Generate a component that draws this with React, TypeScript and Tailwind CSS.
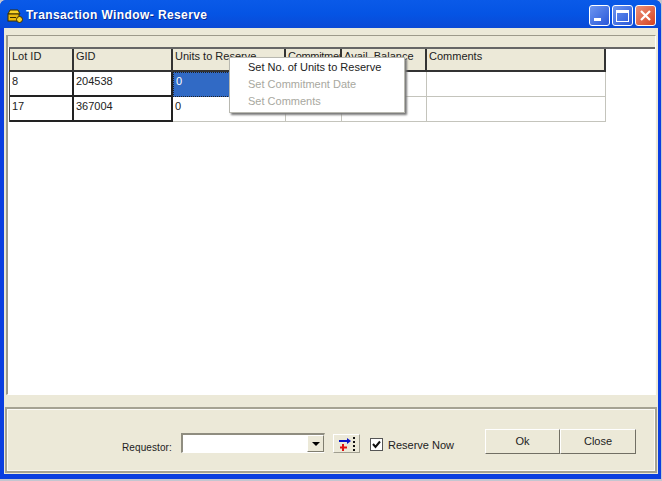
import React from "react";

const font = { fontFamily: '"Liberation Sans", Arial, sans-serif' };

function Cell({ w, className = "", children }: { w: string; className?: string; children?: React.ReactNode }) {
  return <div className={`${w} shrink-0 h-full pl-[2px] overflow-hidden whitespace-nowrap ${className}`}>{children}</div>;
}

const thick = "pt-[3px] border-r-2 border-b-2 border-[#222]";
const thin = "pt-[3px] border-r border-b border-[#c4c4bc]";
const head = "pt-[1px] bg-[#ece9d8] border-r-2 border-b-2 border-[#333]";

export default function App() {
  return (
    <div className="w-[662px] h-[481px] overflow-hidden bg-[#c4c6d0] text-[11px] leading-[13px] text-[#222]" style={font}>
      <div className="w-[661px] h-[479px] flex flex-col bg-[#0a3ee0] rounded-t-[6px]">
        {/* Title bar */}
        <div className="h-[28px] shrink-0 flex items-start pt-[5px] pl-[6px] pr-[5px] rounded-t-[6px] bg-gradient-to-b from-[#0a5ae8] via-[#0554e4] to-[#0a49d6]">
          <svg width="18" height="18" viewBox="0 0 18 18" className="shrink-0 mt-[2px]">
            <path d="M4 3h8l2 4H2z" fill="#f6d32a" stroke="#3a2e00" strokeWidth="1" />
            <rect x="2" y="7" width="11" height="7" fill="#e8b90f" stroke="#3a2e00" />
            <circle cx="13.5" cy="12.5" r="3" fill="#f6d32a" stroke="#3a2c00" />
            <path d="M4 10.5h6" stroke="#3a2e00" />
          </svg>
          <span className="ml-[2px] mt-[4px] text-white font-bold text-[12px] tracking-[0.4px] [text-shadow:1px_1px_#0a2a90]">Transaction Window- Reserve</span>
          <div className="ml-auto flex gap-[2px]">
            <div className="w-[21px] h-[21px] rounded-[3px] border border-white bg-gradient-to-br from-[#6d95f0] to-[#2a56d8] flex items-end pl-[4px] pb-[4px]">
              <div className="w-[7px] h-[3px] bg-white" />
            </div>
            <div className="w-[21px] h-[21px] rounded-[3px] border border-white bg-gradient-to-br from-[#6d95f0] to-[#2a56d8] flex items-center justify-center">
              <div className="w-[13px] h-[12px] border border-white border-t-[3px]" />
            </div>
            <div className="w-[21px] h-[21px] rounded-[3px] border border-white bg-gradient-to-br from-[#ec9078] to-[#d4401c] flex items-center justify-center">
              <svg width="13" height="13" viewBox="0 0 13 13"><path d="M2 2l9 9M11 2l-9 9" stroke="#fff" strokeWidth="2.2" /></svg>
            </div>
          </div>
        </div>

        {/* Client */}
        <div className="flex-1 min-h-0 ml-[4px] mr-[3px] mb-[5px] bg-[#ece9d8] flex flex-col pt-[7px] px-[1px]">
          {/* Grid */}
          <div className="relative h-[360px] shrink-0 mx-[1px] border-l-2 border-t border-[#9d9a8a] border-r border-r-[#fdfdfa] border-b border-b-[#fff]">
            <div className="h-[11px] bg-[#ece9d8]" />
            <div className="bg-white h-[347px] pl-[1px]">
              <div className="flex h-[25px] border-t-2 border-[#666] border-l border-l-[#444]">
                <Cell w="w-[64px]" className={head}>Lot ID</Cell>
                <Cell w="w-[99px]" className={head}>GID</Cell>
                <Cell w="w-[113px]" className={head}>Units to Reserve</Cell>
                <Cell w="w-[56px]" className={`${head} tracking-[-0.3px]`}>Commitment</Cell>
                <Cell w="w-[85px]" className={head}>Avail. Balance</Cell>
                <Cell w="w-[179px]" className={head}>Comments</Cell>
              </div>
              <div className="flex h-[25px] border-l border-l-[#444]">
                <Cell w="w-[64px]" className={thick}>8</Cell>
                <Cell w="w-[99px]" className={thick}>204538</Cell>
                <Cell w="w-[113px]" className="pt-[2px] bg-[#316ac5] text-white border border-dotted border-[#222]">0</Cell>
                <Cell w="w-[56px]" className={thin} />
                <Cell w="w-[85px]" className={thin} />
                <Cell w="w-[179px]" className={thin} />
              </div>
              <div className="flex h-[25px] border-l border-l-[#444]">
                <Cell w="w-[64px]" className={thick}>17</Cell>
                <Cell w="w-[99px]" className={thick}>367004</Cell>
                <Cell w="w-[113px]" className={thin}>0</Cell>
                <Cell w="w-[56px]" className={thin} />
                <Cell w="w-[85px]" className={thin} />
                <Cell w="w-[179px]" className={thin} />
              </div>
            </div>

            {/* Context menu */}
            <div className="absolute left-[221px] top-[21px] w-[176px] h-[56px] bg-white border border-[#b8b8b0] shadow-[2px_2px_2px_#777] pl-[18px] pt-[3px] flex flex-col gap-[4px] leading-[13px]">
              <div className="text-[#222]">Set No. of Units to Reserve</div>
              <div className="text-[#a8a8a0]">Set Commitment Date</div>
              <div className="text-[#a8a8a0]">Set Comments</div>
            </div>
          </div>

          {/* Bottom panel */}
          <div className="mt-[12px] h-[66px] shrink-0 border-2 border-[#a5a292] flex items-start text-[#222] outline outline-1 outline-[#fbfaf5] -outline-offset-3">
            <div className="ml-[115px] mt-[32px] w-[52px] text-[10px] tracking-[0.1px]">Requestor:</div>
            <div className="mt-[24px] ml-[7px] w-[144px] h-[20px] flex bg-white border-t-2 border-l-2 border-[#8f8d80] border-r border-b border-r-[#ece9d8] border-b-[#fff]">
              <div className="flex-1" />
              <div className="w-[17px] h-[17px] bg-[#ece9d8] border border-[#807e70] border-t-white border-l-white flex items-center justify-center">
                <div className="w-0 h-0 border-x-[4px] border-x-transparent border-t-[4px] border-t-black" />
              </div>
            </div>
            <div className="mt-[25px] ml-[8px] w-[27px] h-[19px] bg-[#ece9d8] border border-[#a09e90] border-t-white border-l-white flex items-center justify-center">
              <svg width="20" height="16" viewBox="0 0 20 16">
                <path d="M2 5h9" stroke="#0a14c8" strokeWidth="2" />
                <path d="M10 2l4 3-4 3z" fill="#0a14c8" />
                <path d="M6 8v7M3 11.5h7" stroke="#e01010" strokeWidth="2" />
                <path d="M17 1v2M17 5v2M17 9v2M17 13v2" stroke="#111" strokeWidth="2" />
              </svg>
            </div>
            <div className="mt-[29px] ml-[10px] w-[13px] h-[13px] bg-white border border-[#555] flex items-center justify-center">
              <svg width="9" height="9" viewBox="0 0 9 9"><path d="M1 4l2.5 3L8 1.5" fill="none" stroke="#111" strokeWidth="2" /></svg>
            </div>
            <div className="mt-[30px] ml-[5px] w-[90px] whitespace-nowrap">Reserve Now</div>
            <div className="mt-[20px] ml-[7px] flex">
              <div className="w-[75px] h-[25px] bg-[#ece9d8] border border-t-white border-l-white border-r-[#716f64] border-b-[#716f64] flex items-center justify-center">Ok</div>
              <div className="w-[76px] h-[25px] bg-[#ece9d8] border border-t-white border-l-white border-r-[#716f64] border-b-[#716f64] flex items-center justify-center">Close</div>
            </div>
          </div>
        </div>
      </div>
    </div>
  );
}
